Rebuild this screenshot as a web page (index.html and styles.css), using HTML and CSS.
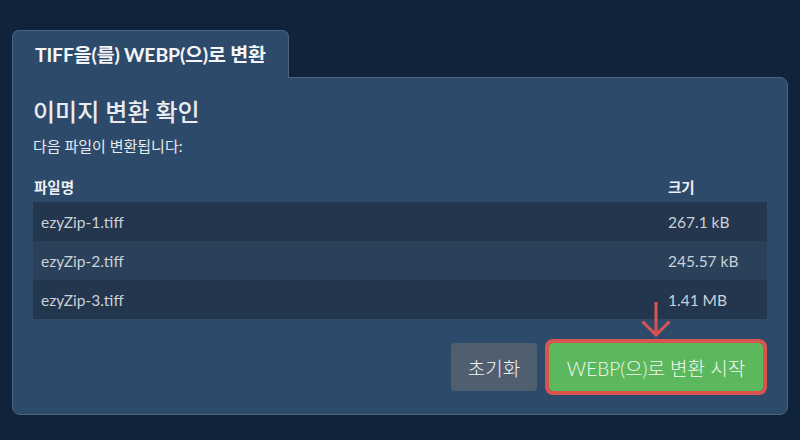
FILE: index.html
```html
<!DOCTYPE html>
<html lang="ko">
<head>
<meta charset="utf-8">
<title>TIFF을(를) WEBP(으)로 변환</title>
<link rel="stylesheet" href="styles.css">
</head>
<body>
<div class="wrap">
  <div class="tab">TIFF을(를) WEBP(으)로 변환</div>
  <div class="panel">
    <h2 class="title">이미지 변환 확인</h2>
    <p class="sub">다음 파일이 변환됩니다:</p>
    <div class="table">
      <div class="row head">
        <div class="hname">파일명</div>
        <div class="hsize">크기</div>
      </div>
      <div class="row odd"><div class="cell">ezyZip-1.tiff</div><div class="cell">267.1 kB</div></div>
      <div class="row even"><div class="cell">ezyZip-2.tiff</div><div class="cell">245.57 kB</div></div>
      <div class="row odd"><div class="cell">ezyZip-3.tiff</div><div class="cell">1.41 MB</div></div>
    </div>
    <div class="actions">
      <button class="btn reset">초기화</button>
      <button class="btn start">WEBP(으)로 변환 시작
        <svg class="arrow" width="32" height="36" viewBox="0 0 32 36" aria-hidden="true">
          <path d="M16 1 V34 M2.5 20.5 L16 34 L29.5 20.5" fill="none" stroke="#d9534f" stroke-width="3" stroke-linecap="butt" stroke-linejoin="miter"/>
        </svg>
      </button>
    </div>
  </div>
</div>
</body>
</html>
```

FILE: styles.css
```css
* { box-sizing: border-box; }
html, body { margin: 0; padding: 0; }
body {
  background: #10233a;
  font-family: Lato, "Noto Sans CJK KR", sans-serif;
  color: #e6eaef;
  width: 800px;
  height: 440px;
  overflow: hidden;
}
.wrap {
  padding: 30px 12px 0 12px;
}
.tab {
  display: inline-block;
  position: relative;
  z-index: 1;
  margin-bottom: -1px;
  background: #2d4a6a;
  border: 1px solid #4a6584;
  border-bottom: none;
  border-radius: 7px 7px 0 0;
  padding: 12px 22px 11px 22px;
  font-size: 19.5px;
  line-height: 24px;
  font-weight: 700;
  color: #f3f5f8;
  letter-spacing: -0.2px;
}
.panel {
  background: #2d4a6a;
  border: 1px solid #4a6584;
  border-radius: 0 8px 8px 8px;
  padding: 18px 20px 23px 20px;
}
.title {
  margin: 0;
  font-size: 24px;
  line-height: 32px;
  font-weight: 500;
  color: #e8ecf1;
}
.sub {
  margin: 8px 0 0 0;
  font-size: 15px;
  line-height: 20px;
  color: #e6eaef;
}
.table {
  margin-top: 22px;
}
.row {
  display: grid;
  grid-template-columns: 1fr 107px;
  align-items: center;
}
.row.head {
  height: 24px;
  align-items: start;
  font-size: 14.5px;
  font-weight: 700;
  line-height: 20px;
  color: #eef1f5;
}
.hname { padding: 0 0 0 1px; }
.hsize { padding: 0 8px; }
.row.odd, .row.even {
  height: 39px;
  font-size: 15.5px;
  color: #c9d1db;
}
.row.odd { background: #24364d; }
.row.even { background: #2a4159; }
.cell { padding: 0 8px; }
.actions {
  display: flex;
  justify-content: flex-end;
  gap: 12px;
  margin-top: 24px;
  padding-right: 4px;
}
.btn {
  height: 48px;
  border: none;
  border-radius: 4px;
  font-family: Lato, "Noto Sans CJK KR", sans-serif;
  font-size: 19px;
  font-weight: 300;
  padding: 0 10px;
  color: #f1f3f5;
}
.reset {
  background: #4f5f70;
  width: 86px;
}
.start {
  position: relative;
  width: 214px;
  background: #5cb85c;
  outline: 4px solid #d9534f;
  outline-offset: 0;
  color: #f4f7f4;
}
.arrow {
  position: absolute;
  left: 91px;
  bottom: calc(100% + 6px);
}
```
